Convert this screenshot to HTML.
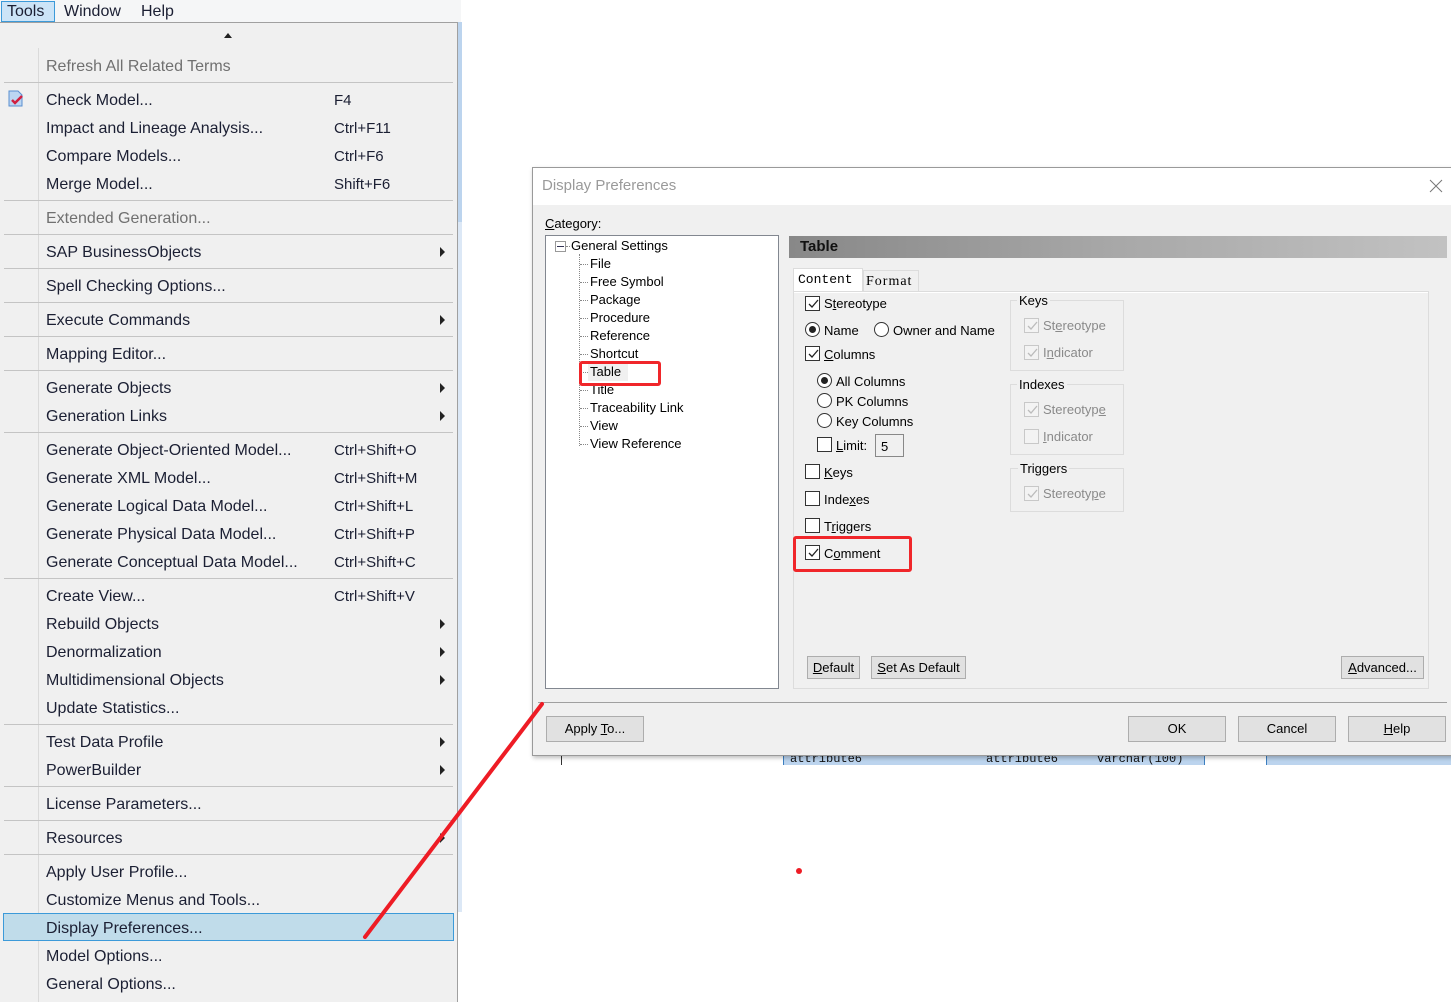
<!DOCTYPE html>
<html><head><meta charset="utf-8">
<style>
*{margin:0;padding:0;box-sizing:border-box}
body{width:1451px;height:1002px;overflow:hidden;background:#fff;position:relative;font-family:"Liberation Sans",sans-serif}
.a{position:absolute;white-space:nowrap}
.mi{position:absolute;left:46px;font-size:16px;color:#1b1f33;height:20px;line-height:20px;margin-top:2px}
.sc{position:absolute;left:334px;font-size:15px;color:#1b1f33;height:20px;line-height:20px;margin-top:2px}
.gr{color:#707070}
.sep{position:absolute;left:4px;width:449px;height:1px;background:#c4c4c4}
.arr{position:absolute;left:440px;width:0;height:0;border-top:5px solid transparent;border-bottom:5px solid transparent;border-left:5px solid #222;margin-top:1px}
.d{font-size:13px;color:#000;position:absolute;white-space:nowrap;line-height:16px}
.cb{position:absolute;width:15px;height:15px;border:1px solid #333;background:#fff}
.cb.dis{border-color:#c8c8c8;background:#f3f3f3}
.rb{position:absolute;width:15px;height:15px;border:1px solid #333;border-radius:50%;background:#fff}
.rb.on::after{content:"";position:absolute;left:3px;top:3px;width:7px;height:7px;border-radius:50%;background:#222}
.btn{position:absolute;background:#e1e1e1;border:1px solid #adadad;font-size:13px;text-align:center;line-height:22px;color:#000}
.tl{font-size:13px;position:absolute;color:#000;line-height:16px}
.dot{position:absolute;border-top:1px dotted #888;width:8px}
.grp{position:absolute;border:1px solid #dcdcdc}
.gl{position:absolute;font-size:13px;background:#f0f0f0;padding:0 2px;line-height:16px}
.dis{color:#8a8a8a}
</style></head><body>

<div class="a" style="left:458px;top:22px;width:4px;height:890px;background:#dce8f6"></div>
<div class="a" style="left:458px;top:22px;width:4px;height:200px;background:#bcd4ee"></div>

<div class="a" style="left:0;top:0;width:461px;height:22px;background:#f5f6f7"></div>
<div class="a" style="left:1px;top:1px;width:54px;height:21px;background:#cce4f7;border:1px solid #3c9ad9"></div>
<div class="a" style="left:7px;top:3px;font-size:16px;color:#1b1f33">Tools</div>
<div class="a" style="left:64px;top:3px;font-size:16px;color:#1b1f33">Window</div>
<div class="a" style="left:141px;top:3px;font-size:16px;color:#1b1f33">Help</div>

<div class="a" style="left:0;top:22px;width:458px;height:980px;background:#f0f0f0;border-right:1px solid #a0a0a0;border-top:1px solid #a0a0a0"></div>
<div class="a" style="left:38px;top:48px;width:1px;height:954px;background:#dadada"></div>
<div class="a" style="left:224px;top:33px;width:0;height:0;border-left:4px solid transparent;border-right:4px solid transparent;border-bottom:5px solid #222"></div>

<div class="a" style="left:3px;top:913px;width:451px;height:28px;background:#c0dcea;border:1px solid #3c9ad9"></div>

<svg class="a" style="left:7px;top:89px" width="20" height="20" viewBox="0 0 20 20"><path d="M2 2h9l4 4v11H2z" fill="#bcd6f2" stroke="#5a8fd0"/><path d="M5 11l3 3 7-7" stroke="#d02040" stroke-width="2.5" fill="none"/></svg>

<div class="mi gr" style="top:55px">Refresh All Related Terms</div>
<div class="sep" style="top:82px"></div>
<div class="mi" style="top:89px">Check Model...</div><div class="sc" style="top:89px">F4</div>
<div class="mi" style="top:117px">Impact and Lineage Analysis...</div><div class="sc" style="top:117px">Ctrl+F11</div>
<div class="mi" style="top:145px">Compare Models...</div><div class="sc" style="top:145px">Ctrl+F6</div>
<div class="mi" style="top:173px">Merge Model...</div><div class="sc" style="top:173px">Shift+F6</div>
<div class="sep" style="top:200px"></div>
<div class="mi gr" style="top:207px">Extended Generation...</div>
<div class="sep" style="top:234px"></div>
<div class="mi" style="top:241px">SAP BusinessObjects</div><div class="arr" style="top:246px"></div>
<div class="sep" style="top:268px"></div>
<div class="mi" style="top:275px">Spell Checking Options...</div>
<div class="sep" style="top:302px"></div>
<div class="mi" style="top:309px">Execute Commands</div><div class="arr" style="top:314px"></div>
<div class="sep" style="top:336px"></div>
<div class="mi" style="top:343px">Mapping Editor...</div>
<div class="sep" style="top:370px"></div>
<div class="mi" style="top:377px">Generate Objects</div><div class="arr" style="top:382px"></div>
<div class="mi" style="top:405px">Generation Links</div><div class="arr" style="top:410px"></div>
<div class="sep" style="top:432px"></div>
<div class="mi" style="top:439px">Generate Object-Oriented Model...</div><div class="sc" style="top:439px">Ctrl+Shift+O</div>
<div class="mi" style="top:467px">Generate XML Model...</div><div class="sc" style="top:467px">Ctrl+Shift+M</div>
<div class="mi" style="top:495px">Generate Logical Data Model...</div><div class="sc" style="top:495px">Ctrl+Shift+L</div>
<div class="mi" style="top:523px">Generate Physical Data Model...</div><div class="sc" style="top:523px">Ctrl+Shift+P</div>
<div class="mi" style="top:551px">Generate Conceptual Data Model...</div><div class="sc" style="top:551px">Ctrl+Shift+C</div>
<div class="sep" style="top:578px"></div>
<div class="mi" style="top:585px">Create View...</div><div class="sc" style="top:585px">Ctrl+Shift+V</div>
<div class="mi" style="top:613px">Rebuild Objects</div><div class="arr" style="top:618px"></div>
<div class="mi" style="top:641px">Denormalization</div><div class="arr" style="top:646px"></div>
<div class="mi" style="top:669px">Multidimensional Objects</div><div class="arr" style="top:674px"></div>
<div class="mi" style="top:697px">Update Statistics...</div>
<div class="sep" style="top:724px"></div>
<div class="mi" style="top:731px">Test Data Profile</div><div class="arr" style="top:736px"></div>
<div class="mi" style="top:759px">PowerBuilder</div><div class="arr" style="top:764px"></div>
<div class="sep" style="top:786px"></div>
<div class="mi" style="top:793px">License Parameters...</div>
<div class="sep" style="top:820px"></div>
<div class="mi" style="top:827px">Resources</div><div class="arr" style="top:832px"></div>
<div class="sep" style="top:854px"></div>
<div class="mi" style="top:861px">Apply User Profile...</div>
<div class="mi" style="top:889px">Customize Menus and Tools...</div>
<div class="mi" style="top:917px">Display Preferences...</div>
<div class="mi" style="top:945px">Model Options...</div>
<div class="mi" style="top:973px">General Options...</div>

<div class="a" style="left:783px;top:755px;width:422px;height:10px;background:#bcd4ee;border-left:1px solid #3c7fc0;border-right:1px solid #3c7fc0"></div>
<div class="a" style="left:1266px;top:755px;width:185px;height:10px;background:#bcd4ee;border-left:1px solid #3c7fc0"></div>
<div class="a" style="left:561px;top:755px;width:1px;height:10px;background:#333"></div>
<div class="a" style="left:790px;top:752px;font-family:'Liberation Mono',monospace;font-size:12px;color:#111">attribute6</div>
<div class="a" style="left:986px;top:752px;font-family:'Liberation Mono',monospace;font-size:12px;color:#111">attribute6</div>
<div class="a" style="left:1097px;top:752px;font-family:'Liberation Mono',monospace;font-size:12px;color:#111">varchar(100)</div>

<div class="a" style="left:532px;top:167px;width:925px;height:589px;background:#f0f0f0;border:1px solid #9a9a9a;box-shadow:1px 2px 4px rgba(0,0,0,.25)"></div>
<div class="a" style="left:533px;top:168px;width:918px;height:37px;background:#fff"></div>
<div class="a" style="left:542px;top:177px;font-size:15px;color:#9a9a9a">Display Preferences</div>
<svg class="a" style="left:1429px;top:179px" width="14" height="14"><path d="M1 1L13 13M13 1L1 13" stroke="#777" stroke-width="1"/></svg>

<div class="d" style="left:545px;top:216px"><u>C</u>ategory:</div>
<div class="a" style="left:545px;top:235px;width:234px;height:454px;background:#fff;border:1px solid #828790"></div>
<div class="a" style="left:555px;top:241px;width:11px;height:11px;border:1px solid #999;background:#fff"></div>
<div class="a" style="left:557px;top:246px;width:7px;height:1px;background:#335"></div>
<div class="dot" style="left:566px;top:246px;width:4px"></div>
<div class="tl" style="left:571px;top:238px">General Settings</div>
<div class="a" style="left:579px;top:254px;width:0;height:192px;border-left:1px dotted #888"></div>
<div class="dot" style="left:580px;top:264px"></div><div class="tl" style="left:590px;top:256px">File</div>
<div class="dot" style="left:580px;top:282px"></div><div class="tl" style="left:590px;top:274px">Free Symbol</div>
<div class="dot" style="left:580px;top:300px"></div><div class="tl" style="left:590px;top:292px">Package</div>
<div class="dot" style="left:580px;top:318px"></div><div class="tl" style="left:590px;top:310px">Procedure</div>
<div class="dot" style="left:580px;top:336px"></div><div class="tl" style="left:590px;top:328px">Reference</div>
<div class="dot" style="left:580px;top:354px"></div><div class="tl" style="left:590px;top:346px">Shortcut</div>
<div class="dot" style="left:580px;top:390px"></div><div class="tl" style="left:590px;top:382px">Title</div>
<div class="a" style="left:588px;top:363px;width:40px;height:18px;background:#f0f0f0"></div>
<div class="dot" style="left:580px;top:372px"></div><div class="tl" style="left:590px;top:364px">Table</div>
<div class="a" style="left:579px;top:361px;width:82px;height:25px;border:3px solid #f0262a;border-radius:3px"></div>
<div class="dot" style="left:580px;top:408px"></div><div class="tl" style="left:590px;top:400px">Traceability Link</div>
<div class="dot" style="left:580px;top:426px"></div><div class="tl" style="left:590px;top:418px">View</div>
<div class="dot" style="left:580px;top:444px"></div><div class="tl" style="left:590px;top:436px">View Reference</div>

<div class="a" style="left:789px;top:236px;width:658px;height:22px;background:linear-gradient(90deg,#888 0%,#a8a8a8 50%,#c2c2c2 100%)"></div>
<div class="a" style="left:800px;top:237px;font-size:15px;font-weight:bold;color:#111;line-height:20px">Table</div>

<div class="a" style="left:793px;top:268px;width:70px;height:24px;background:#fff;border:1px solid #dcdcdc;border-bottom:none"></div>
<div class="a" style="left:798px;top:272px;font-family:'Liberation Mono',monospace;font-size:13px">Content</div>
<div class="a" style="left:863px;top:270px;width:56px;height:21px;background:#f0f0f0;border:1px solid #dcdcdc;border-bottom:none"></div>
<div class="a" style="left:866px;top:274px;font-family:'Liberation Serif',monospace;font-size:14px;letter-spacing:1px">Format</div>
<div class="a" style="left:793px;top:291px;width:636px;height:398px;border:1px solid #dcdcdc;background:#f0f0f0"></div>
<div class="a" style="left:794px;top:292px;width:634px;height:1px;background:#fff"></div>

<svg width="0" height="0" style="position:absolute"><defs><path id="ck" d="M3 7l3 3 6-7" stroke="#222" stroke-width="1.3" fill="none"/></defs></svg>

<div class="cb" style="left:805px;top:296px"><svg width="15" height="15"><use href="#ck"/></svg></div><div class="d" style="left:824px;top:296px">S<u>t</u>ereotype</div>
<div class="rb on" style="left:805px;top:322px"></div><div class="d" style="left:824px;top:323px">Name</div>
<div class="rb" style="left:874px;top:322px"></div><div class="d" style="left:893px;top:323px">Owner and Name</div>
<div class="cb" style="left:805px;top:346px"><svg width="15" height="15"><use href="#ck"/></svg></div><div class="d" style="left:824px;top:347px"><u>C</u>olumns</div>
<div class="rb on" style="left:817px;top:373px"></div><div class="d" style="left:836px;top:374px">All Columns</div>
<div class="rb" style="left:817px;top:393px"></div><div class="d" style="left:836px;top:394px">PK Columns</div>
<div class="rb" style="left:817px;top:413px"></div><div class="d" style="left:836px;top:414px">Key Columns</div>
<div class="cb" style="left:817px;top:437px"></div><div class="d" style="left:836px;top:438px"><u>L</u>imit:</div>
<div class="a" style="left:875px;top:434px;width:29px;height:23px;border:1px solid #888;background:#f0f0f0;font-size:13px;padding:4px 0 0 5px">5</div>
<div class="cb" style="left:805px;top:464px"></div><div class="d" style="left:824px;top:465px"><u>K</u>eys</div>
<div class="cb" style="left:805px;top:491px"></div><div class="d" style="left:824px;top:492px">Inde<u>x</u>es</div>
<div class="cb" style="left:805px;top:518px"></div><div class="d" style="left:824px;top:519px">T<u>r</u>iggers</div>
<div class="cb" style="left:805px;top:545px"><svg width="15" height="15"><use href="#ck"/></svg></div><div class="d" style="left:824px;top:546px">C<u>o</u>mment</div>
<div class="a" style="left:793px;top:536px;width:119px;height:36px;border:3px solid #f0262a;border-radius:3px"></div>

<div class="grp" style="left:1010px;top:300px;width:114px;height:71px"></div><div class="gl" style="left:1017px;top:293px">Keys</div>
<div class="cb dis" style="left:1024px;top:318px"><svg width="15" height="15"><path d="M3 7l3 3 6-7" stroke="#bbb" stroke-width="1.3" fill="none"/></svg></div><div class="d dis" style="left:1043px;top:318px">St<u>e</u>reotype</div>
<div class="cb dis" style="left:1024px;top:345px"><svg width="15" height="15"><path d="M3 7l3 3 6-7" stroke="#bbb" stroke-width="1.3" fill="none"/></svg></div><div class="d dis" style="left:1043px;top:345px">I<u>n</u>dicator</div>
<div class="grp" style="left:1010px;top:384px;width:114px;height:71px"></div><div class="gl" style="left:1017px;top:377px">Indexes</div>
<div class="cb dis" style="left:1024px;top:402px"><svg width="15" height="15"><path d="M3 7l3 3 6-7" stroke="#bbb" stroke-width="1.3" fill="none"/></svg></div><div class="d dis" style="left:1043px;top:402px">Stereotyp<u>e</u></div>
<div class="cb dis" style="left:1024px;top:429px"></div><div class="d dis" style="left:1043px;top:429px"><u>I</u>ndicator</div>
<div class="grp" style="left:1010px;top:468px;width:114px;height:44px"></div><div class="gl" style="left:1018px;top:461px">Triggers</div>
<div class="cb dis" style="left:1024px;top:486px"><svg width="15" height="15"><path d="M3 7l3 3 6-7" stroke="#bbb" stroke-width="1.3" fill="none"/></svg></div><div class="d dis" style="left:1043px;top:486px">Stereoty<u>p</u>e</div>

<div class="btn" style="left:807px;top:656px;width:53px;height:23px"><u>D</u>efault</div>
<div class="btn" style="left:871px;top:656px;width:95px;height:23px"><u>S</u>et As Default</div>
<div class="btn" style="left:1341px;top:656px;width:83px;height:23px"><u>A</u>dvanced...</div>

<div class="a" style="left:538px;top:702px;width:909px;height:1px;background:#a0a0a0"></div>
<div class="btn" style="left:546px;top:716px;width:98px;height:26px;line-height:24px">Apply <u>T</u>o...</div>
<div class="btn" style="left:1128px;top:716px;width:98px;height:26px;line-height:24px">OK</div>
<div class="btn" style="left:1238px;top:716px;width:98px;height:26px;line-height:24px">Cancel</div>
<div class="btn" style="left:1348px;top:716px;width:98px;height:26px;line-height:24px"><u>H</u>elp</div>

<svg class="a" style="left:0;top:0" width="1451" height="1002"><line x1="542" y1="704" x2="365" y2="937" stroke="#ee1c25" stroke-width="4" stroke-linecap="round"/><circle cx="799" cy="871" r="3" fill="#ee1c25"/></svg>
</body></html>
